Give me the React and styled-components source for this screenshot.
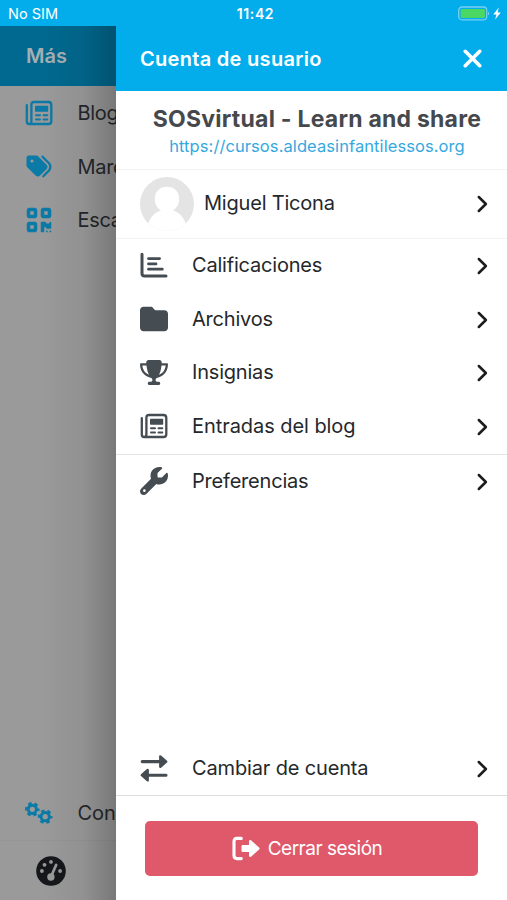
import styled, { createGlobalStyle } from "styled-components"
import { FaFolder, FaQrcode, FaTags, FaTrophy, FaWrench, FaXmark } from "react-icons/fa6"

const GlobalStyle = createGlobalStyle`
  * {
    box-sizing: border-box;
  }

  body {
    margin: 0;
    font-family: Inter, "Liberation Sans", sans-serif;
    color: #25282b;
    background: #ffffff;
  }
`

const Screen = styled.div`
  position: relative;
  display: flex;
  flex-direction: column;
  width: 507px;
  height: 900px;
  overflow: hidden;
`

const StatusBar = styled.header`
  display: grid;
  grid-template-columns: 1fr auto 1fr;
  align-items: center;
  flex: none;
  height: 26px;
  padding: 1px 4px 0 8px;
  background: #03adec;
  color: #ffffff;
  font-size: 14.5px;
`

const Clock = styled.span`
  font-size: 14px;
  font-weight: 600;
  letter-spacing: 0.6px;
`

const BatterySvg = styled.svg`
  justify-self: end;
`

const MorePage = styled.div`
  display: flex;
  flex-direction: column;
  flex: 1;
  background: #9a9a9a;
`

const MoreHeader = styled.div`
  display: flex;
  align-items: center;
  height: 60px;
  padding-left: 26px;
  background: #01698f;
  color: #a5afb3;
  font-size: 20px;
  font-weight: 600;
`

const MoreList = styled.div`
  flex: 1;
`

const MoreItem = styled.div`
  display: flex;
  align-items: center;
  gap: 24.5px;
  height: 53.75px;
  padding-left: 25px;
  font-size: 20px;
  letter-spacing: ${(props) => props.$spacing ?? -0.3}px;
  white-space: nowrap;

  svg {
    width: 28px;
    height: ${(props) => props.$iconSize || 28}px;
    color: #0b7aa6;
  }
`

const TabBar = styled.div`
  display: flex;
  align-items: center;
  height: 60px;
  padding-left: 36px;
  border-top: 1px solid #959595;

  svg {
    width: 30px;
    height: 30px;
    color: #15171a;
  }
`

const Shade = styled.div`
  position: absolute;
  top: 26px;
  left: 0;
  width: 116px;
  bottom: 0;
  background: linear-gradient(to right, rgba(0, 0, 0, 0) 35%, rgba(0, 0, 0, 0.06) 72%, rgba(0, 0, 0, 0.22));
`

const AccountPanel = styled.aside`
  position: absolute;
  top: 26px;
  right: 0;
  bottom: 0;
  display: flex;
  flex-direction: column;
  width: 391px;
  background: #ffffff;
`

const PanelHeader = styled.div`
  display: flex;
  align-items: center;
  justify-content: space-between;
  height: 65px;
  padding: 0 21px 0 24px;
  background: #03adec;
  color: #ffffff;
  font-size: 20px;
  font-weight: 600;
  letter-spacing: 0.3px;

  svg {
    width: 27px;
    height: 29px;
  }
`

const SiteInfo = styled.div`
  height: 79px;
  padding: 14px 0 0 11px;
  border-bottom: 1px solid #f3f3f3;
  text-align: center;
  white-space: nowrap;
`

const SiteName = styled.h2`
  margin: 0;
  color: #45494d;
  font-size: 23px;
  font-weight: 700;
  line-height: 28px;
  letter-spacing: 0.23px;
`

const SiteUrl = styled.a`
  display: block;
  color: #35a9df;
  font-size: 16.5px;
  line-height: 27px;
  letter-spacing: 0.08px;
`

const Row = styled.div`
  display: flex;
  align-items: center;
  flex: none;
  height: ${(props) => props.$height || 53.75}px;
  padding: 0 18px 2px 24px;
  border-bottom: ${(props) => (props.$line ? `1px solid ${props.$line}` : "none")};
`

const RowIcon = styled.span`
  display: flex;
  width: 52px;
  color: #454c52;

  svg {
    width: 28px;
    height: ${(props) => props.$size || 28}px;
  }
`

const RowLabel = styled.span`
  flex: 1;
  font-size: 20px;
  letter-spacing: ${(props) => props.$spacing ?? -0.2}px;
  white-space: nowrap;
`

const Chevron = styled.svg`
  width: 14px;
  height: 18px;
  margin-top: 2px;
`

const AvatarSvg = styled.svg`
  width: 54px;
  height: 54px;
  margin: 2px 10px 0 0;
`

const Spacer = styled.div`
  flex: 1;
`

const PanelFooter = styled.div`
  height: 104px;
  padding: 25px 29px 0;
`

const LogoutButton = styled.button`
  display: flex;
  align-items: center;
  justify-content: center;
  gap: 8px;
  width: 333px;
  height: 55px;
  padding: 0 9px 0 0;
  border: none;
  border-radius: 5px;
  background: #df596b;
  color: #ffffff;
  font-family: inherit;
  font-size: 19px;
  letter-spacing: -0.5px;

  svg {
    width: 28px;
    height: 28px;
  }
`

const GradesIcon = () => (
  <svg viewBox="0 0 28 28" fill="none" stroke="currentColor" strokeLinecap="round">
    <path d="M2 3.2 V22.4 Q2 25 4.6 25 H26" strokeWidth="3" strokeLinejoin="round" />
    <path d="M8.5 7.6 H19.6 M8.5 12.9 H16 M8.5 18.2 H22.3" strokeWidth="2.8" />
  </svg>
)

const NewspaperIcon = () => (
  <svg viewBox="0 0 28 28" fill="none" stroke="currentColor" strokeWidth="2.3" strokeLinecap="round">
    <path d="M9 3 H23.5 Q26.3 3 26.3 5.8 V22.2 Q26.3 25 23.5 25 H4.2 Q1.8 25 1.8 22.4 V6.2 M6.4 22.5 V5.6 Q6.4 3 9 3 M6.4 22 Q6.4 25 4.2 25" />
    <rect x="10" y="6.8" width="13.2" height="6" rx="0.8" fill="currentColor" stroke="none" />
    <path d="M11 16.3 H15 M18.5 16.3 H22.3 M11 20.6 H15 M18.5 20.6 H22.3" strokeWidth="2" />
  </svg>
)

const SwitchIcon = () => (
  <svg viewBox="0 0 28 28" fill="currentColor" stroke="currentColor" strokeLinecap="round" strokeLinejoin="round">
    <path d="M2.2 7.6 H21 M26 21.2 H7" strokeWidth="3.1" />
    <path d="M20.3 2.4 V12.8 L26.2 7.6Z M7.7 16 V26.4 L1.8 21.2Z" strokeWidth="2.4" />
  </svg>
)

const LogoutIcon = () => (
  <svg viewBox="0 0 28 28" fill="currentColor" stroke="currentColor" strokeLinecap="round" strokeLinejoin="round">
    <path d="M9.3 3.4 H5 Q2 3.4 2 6.4 V20.6 Q2 23.6 5 23.6 H9.3" fill="none" strokeWidth="3.1" />
    <path d="M10.7 11.2 H18.2 V6.2 L26.3 13.5 L18.2 20.8 V15.8 H10.7Z" strokeWidth="2.4" />
  </svg>
)

const Gear = ({ x, y }) => (
  <g fill="none" stroke="currentColor">
    <circle cx={x} cy={y} r="4.1" strokeWidth="3" />
    <circle cx={x} cy={y} r="6" strokeWidth="2.6" strokeDasharray="3.3 2.983" strokeDashoffset="1.65" />
  </g>
)

const GearsIcon = () => (
  <svg viewBox="0 0 28 28">
    <Gear x={7.3} y={10.3} />
    <Gear x={20.2} y={17.7} />
  </svg>
)

const GaugeIcon = () => (
  <svg viewBox="0 0 30 30">
    <circle cx="15" cy="15" r="14.8" fill="currentColor" />
    <g fill="#999999">
      <circle cx="5.9" cy="15" r="1.9" />
      <circle cx="8.5" cy="8.8" r="1.9" />
      <circle cx="15" cy="5.9" r="1.9" />
      <circle cx="24.1" cy="15" r="1.9" />
      <circle cx="14.9" cy="21" r="3.7" />
    </g>
    <path d="M15.5 19.5 L20.2 8.9" stroke="#999999" strokeWidth="2.7" strokeLinecap="round" />
  </svg>
)

const Arrow = () => (
  <Chevron viewBox="0 0 14 18" fill="none" stroke="#1b1c1e" strokeWidth="2.5" strokeLinecap="round" strokeLinejoin="round">
    <path d="M3.8 2 L10.9 9 L3.8 16" />
  </Chevron>
)

const Battery = () => (
  <BatterySvg width="45" height="16" viewBox="0 0 45 16">
    <rect x="0.7" y="1" width="28" height="12.8" rx="3.2" fill="none" stroke="#78cff2" strokeWidth="1.3" />
    <rect x="2.6" y="2.9" width="24.3" height="9" rx="1.3" fill="#4bd763" />
    <path d="M30 5.5 Q32.4 7.5 30 9.5Z" fill="#78cff2" />
    <path d="M40.8 1.4 L35.3 8.4 H38.4 L37.2 13.4 L42.8 6.4 H39.6Z" fill="#ffffff" />
  </BatterySvg>
)

const Avatar = () => (
  <AvatarSvg viewBox="0 0 54 54">
    <defs>
      <clipPath id="avatarClip">
        <circle cx="27" cy="27" r="27" />
      </clipPath>
    </defs>
    <g clipPath="url(#avatarClip)">
      <rect width="54" height="54" fill="#e4e4e4" />
      <path
        d="M5 54 L8 47 C11 39 15 35.5 21 33.5 C17 31 14.8 27 14.8 21.5 C14.8 14.5 20 9.8 27 9.8 C34 9.8 39.2 14.5 39.2 21.5 C39.2 27 37 31 33 33.5 C39 35.5 43 39 46 47 L49 54Z"
        fill="#ffffff"
      />
    </g>
  </AvatarSvg>
)

const accountItems = [
  { label: "Calificaciones", icon: GradesIcon },
  { label: "Archivos", icon: FaFolder },
  { label: "Insignias", icon: FaTrophy, size: 25 },
  { label: "Entradas del blog", icon: NewspaperIcon, spacing: -0.06, height: 55, line: "#e2e3e4" },
  { label: "Preferencias", icon: FaWrench },
]

const App = () => {
  return (
    <Screen>
      <GlobalStyle />
      <StatusBar>
        <span>No SIM</span>
        <Clock>11:42</Clock>
        <Battery />
      </StatusBar>

      <MorePage>
        <MoreHeader>Más</MoreHeader>
        <MoreList>
          <MoreItem>
            <NewspaperIcon />
            Blog
          </MoreItem>
          <MoreItem $iconSize={25}>
            <FaTags />
            Marcas
          </MoreItem>
          <MoreItem>
            <FaQrcode />
            Escanear
          </MoreItem>
        </MoreList>
        <MoreItem $spacing={0}>
          <GearsIcon />
          Configuración
        </MoreItem>
        <TabBar>
          <GaugeIcon />
        </TabBar>
      </MorePage>
      <Shade />

      <AccountPanel>
        <PanelHeader>
          Cuenta de usuario
          <FaXmark />
        </PanelHeader>
        <SiteInfo>
          <SiteName>SOSvirtual - Learn and share</SiteName>
          <SiteUrl>https://cursos.aldeasinfantilessos.org</SiteUrl>
        </SiteInfo>
        <Row $height={69} $line="#f3f3f3">
          <Avatar />
          <RowLabel>Miguel Ticona</RowLabel>
          <Arrow />
        </Row>
        {accountItems.map(({ label, icon: Icon, size, spacing, height, line }) => (
          <Row key={label} $height={height} $line={line}>
            <RowIcon $size={size}>
              <Icon />
            </RowIcon>
            <RowLabel $spacing={spacing}>{label}</RowLabel>
            <Arrow />
          </Row>
        ))}
        <Spacer />
        <Row $height={54} $line="#dcdddf">
          <RowIcon>
            <SwitchIcon />
          </RowIcon>
          <RowLabel $spacing={-0.15}>Cambiar de cuenta</RowLabel>
          <Arrow />
        </Row>
        <PanelFooter>
          <LogoutButton>
            <LogoutIcon />
            Cerrar sesión
          </LogoutButton>
        </PanelFooter>
      </AccountPanel>
    </Screen>
  )
}

export default App
